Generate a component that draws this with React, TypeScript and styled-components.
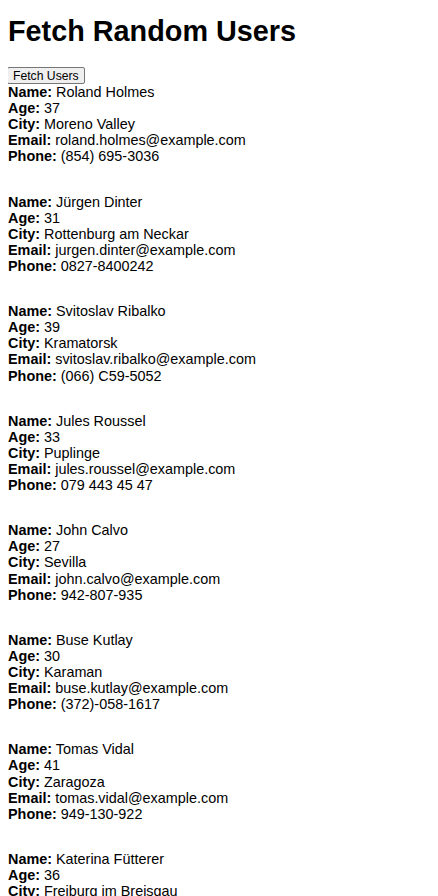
import React from "react";
import styled, { createGlobalStyle } from "styled-components";

const Global = createGlobalStyle`
  body {
    margin: 8px;
    font-family: "Liberation Sans", Arial, sans-serif;
    font-size: 14.4px;
    line-height: 16.1px;
    color: #000;
    background: #fff;
  }
`;

const Title = styled.h1`
  font-size: 28.8px;
  line-height: 32px;
  font-weight: bold;
  margin: 7px 0 20px;
`;

const FetchButton = styled.button`
  font-family: "Liberation Sans", Arial, sans-serif;
  font-size: 12.2px;
  line-height: 12px;
  height: 17px;
  padding: 0 5px;
  margin: 0 0 0 -1px;
  color: #000;
  background: #efefef;
  border: 1px solid #767676;
  border-radius: 2px;
  display: block;
`;

const UserList = styled.div`
  display: flex;
  flex-direction: column;
  gap: 29.1px;
`;

const UserCard = styled.div`
  display: flex;
  flex-direction: column;
`;

const Row = styled.div`
  white-space: nowrap;
`;

const Label = styled.strong`
  font-weight: bold;
`;

const users = [
  { name: "Roland Holmes", age: 37, city: "Moreno Valley", email: "roland.holmes@example.com", phone: "(854) 695-3036" },
  { name: "Jürgen Dinter", age: 31, city: "Rottenburg am Neckar", email: "jurgen.dinter@example.com", phone: "0827-8400242" },
  { name: "Svitoslav Ribalko", age: 39, city: "Kramatorsk", email: "svitoslav.ribalko@example.com", phone: "(066) C59-5052" },
  { name: "Jules Roussel", age: 33, city: "Puplinge", email: "jules.roussel@example.com", phone: "079 443 45 47" },
  { name: "John Calvo", age: 27, city: "Sevilla", email: "john.calvo@example.com", phone: "942-807-935" },
  { name: "Buse Kutlay", age: 30, city: "Karaman", email: "buse.kutlay@example.com", phone: "(372)-058-1617" },
  { name: "Tomas Vidal", age: 41, city: "Zaragoza", email: "tomas.vidal@example.com", phone: "949-130-922" },
  { name: "Katerina Fütterer", age: 36, city: "Freiburg im Breisgau", email: "katerina.futterer@example.com", phone: "0434-2278913" },
];

export default function App() {
  return (
    <>
      <Global />
      <Title>Fetch Random Users</Title>
      <FetchButton>Fetch Users</FetchButton>
      <UserList>
        {users.map((u) => (
          <UserCard key={u.email}>
            <Row><Label>Name:</Label> {u.name}</Row>
            <Row><Label>Age:</Label> {u.age}</Row>
            <Row><Label>City:</Label> {u.city}</Row>
            <Row><Label>Email:</Label> {u.email}</Row>
            <Row><Label>Phone:</Label> {u.phone}</Row>
          </UserCard>
        ))}
      </UserList>
    </>
  );
}
